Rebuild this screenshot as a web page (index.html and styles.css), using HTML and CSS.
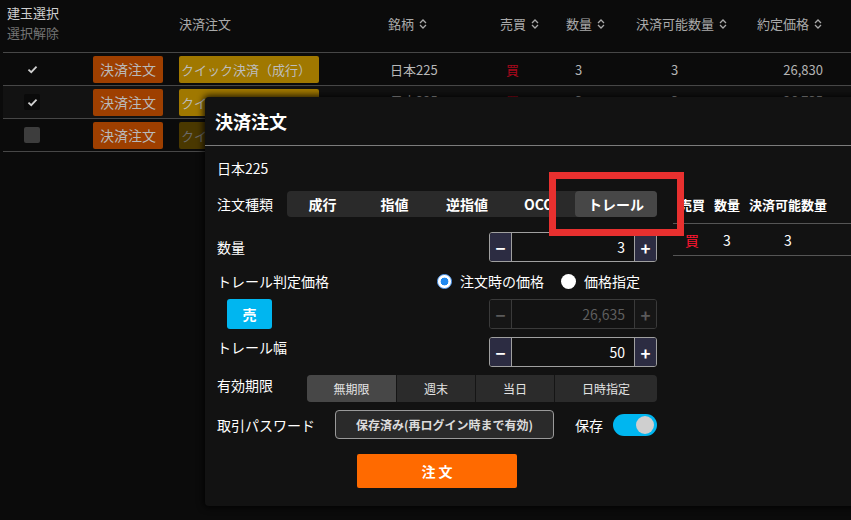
FILE: index.html
```html
<!DOCTYPE html>
<html lang="ja">
<head>
<meta charset="utf-8">
<title>決済注文</title>
<link rel="stylesheet" href="styles.css">
</head>
<body>
<div class="page">
  <div class="positions">
    <div class="prow phead">
      <div class="pc c-sel"><div class="sel-title">建玉選択</div><div class="sel-clear">選択解除</div></div>
      <div class="pc"></div>
      <div class="pc hd h-order">決済注文</div>
      <div class="pc hd h-name">銘柄<svg class="sort" viewBox="0 0 8 12"><path d="M1 5 L4 2 L7 5 M1 7 L4 10 L7 7"/></svg></div>
      <div class="pc hd h-side">売買<svg class="sort" viewBox="0 0 8 12"><path d="M1 5 L4 2 L7 5 M1 7 L4 10 L7 7"/></svg></div>
      <div class="pc hd h-qty">数量<svg class="sort" viewBox="0 0 8 12"><path d="M1 5 L4 2 L7 5 M1 7 L4 10 L7 7"/></svg></div>
      <div class="pc hd h-avail">決済可能数量<svg class="sort" viewBox="0 0 8 12"><path d="M1 5 L4 2 L7 5 M1 7 L4 10 L7 7"/></svg></div>
      <div class="pc hd h-price">約定価格<svg class="sort" viewBox="0 0 8 12"><path d="M1 5 L4 2 L7 5 M1 7 L4 10 L7 7"/></svg></div>
    </div>

    <div class="prow tr r-odd">
      <div class="pc"><span class="cb cb-on"><svg viewBox="0 0 12 10"><path d="M1.5 5.2 L4.6 8 L10.5 1.8"/></svg></span></div>
      <div class="pc"><span class="btn-close">決済注文</span></div>
      <div class="pc"><span class="btn-quick">クイック決済（成行）</span></div>
      <div class="pc v-name">日本225</div>
      <div class="pc v-side">買</div>
      <div class="pc v-qty">3</div>
      <div class="pc v-avail">3</div>
      <div class="pc v-price">26,830</div>
    </div>

    <div class="prow tr r-even">
      <div class="pc"><span class="cb cb-on cb-dark"><svg viewBox="0 0 12 10"><path d="M1.5 5.2 L4.6 8 L10.5 1.8"/></svg></span></div>
      <div class="pc"><span class="btn-close">決済注文</span></div>
      <div class="pc"><span class="btn-quick">クイック決済（成行）</span></div>
      <div class="pc v-name">日本225</div>
      <div class="pc v-side">買</div>
      <div class="pc v-qty">3</div>
      <div class="pc v-avail">3</div>
      <div class="pc v-price">26,735</div>
    </div>

    <div class="prow tr r-odd">
      <div class="pc"><span class="cb cb-off"></span></div>
      <div class="pc"><span class="btn-close">決済注文</span></div>
      <div class="pc"><span class="btn-quick btn-quick-dim">クイック決済（成行）</span></div>
      <div class="pc v-name">日本225</div>
      <div class="pc v-side">買</div>
      <div class="pc v-qty">3</div>
      <div class="pc v-avail">3</div>
      <div class="pc v-price">26,700</div>
    </div>
  </div>

  <div class="modal">
    <div class="modal-head">決済注文</div>
    <div class="modal-body">
      <div class="form">
        <div class="frow f-name">日本225</div>

        <div class="frow f-type">
          <span class="lbl">注文種類</span>
          <div class="seg">
            <span class="seg-item">成行</span>
            <span class="seg-item">指値</span>
            <span class="seg-item">逆指値</span>
            <span class="seg-item">OCO</span>
            <span class="seg-item active">トレール</span>
          </div>
        </div>

        <div class="frow f-qty">
          <span class="lbl">数量</span>
          <div class="stepper">
            <span class="st-btn">−</span>
            <span class="st-val">3</span>
            <span class="st-btn">+</span>
          </div>
        </div>

        <div class="frow f-judge">
          <span class="lbl">トレール判定価格</span>
          <div class="radios">
            <span class="radio radio-on"></span><span class="rlbl">注文時の価格</span>
            <span class="radio radio-off"></span><span class="rlbl">価格指定</span>
          </div>
        </div>

        <div class="frow f-sell">
          <span class="btn-sell">売</span>
          <div class="stepper disabled">
            <span class="st-btn">−</span>
            <span class="st-val">26,635</span>
            <span class="st-btn">+</span>
          </div>
        </div>

        <div class="frow f-width">
          <span class="lbl">トレール幅</span>
          <div class="stepper">
            <span class="st-btn">−</span>
            <span class="st-val">50</span>
            <span class="st-btn">+</span>
          </div>
        </div>

        <div class="frow f-exp">
          <span class="lbl">有効期限</span>
          <div class="seg2">
            <span class="seg2-item active">無期限</span>
            <span class="seg2-item">週末</span>
            <span class="seg2-item">当日</span>
            <span class="seg2-item">日時指定</span>
          </div>
        </div>

        <div class="frow f-pass">
          <span class="lbl lbl-pass">取引パスワード</span>
          <span class="btn-pass">保存済み(再ログイン時まで有効)</span>
          <span class="save-lbl">保存</span>
          <span class="toggle"><span class="knob"></span></span>
        </div>

        <div class="frow f-submit">
          <span class="btn-order">注文</span>
        </div>
      </div>

      <div class="side">
        <div class="side-row side-head">
          <span>売買</span><span>数量</span><span>決済可能数量</span>
        </div>
        <div class="side-row side-data">
          <span class="buy">買</span><span>3</span><span>3</span>
        </div>
      </div>
    </div>
  </div>

  <div class="annot"></div>
</div>
</body>
</html>
```

FILE: styles.css
```css
* { box-sizing: border-box; }

html, body {
  margin: 0;
  padding: 0;
}

body {
  width: 851px;
  height: 520px;
  overflow: hidden;
  background: #0b0b0b;
  font-family: "Noto Sans CJK JP", "Noto Sans", sans-serif;
  color: #b4b4b4;
}

.page {
  position: relative;
  width: 851px;
  height: 520px;
  overflow: hidden;
}

/* ---------- positions table ---------- */
.positions {
  margin-left: 3px;
}

.prow {
  display: grid;
  grid-template-columns: 83px 86px 208px 100px 70px 70px 120px 1fr;
  border-bottom: 1px solid #474747;
}

.phead {
  height: 53px;
}

.pc {
  display: flex;
  align-items: center;
  min-width: 0;
  white-space: nowrap;
}

.c-sel {
  flex-direction: column;
  align-items: flex-start;
  padding: 3px 0 0 4px;
  font-size: 13px;
  line-height: 20px;
}
.sel-title { color: #cfcfcf; }
.sel-clear { color: #747474; }

.hd {
  align-self: start;
  padding-top: 13px;
  font-size: 13px;
  line-height: 22px;
  color: #a9a9a9;
}
.sort {
  width: 8px;
  height: 12px;
  margin-left: 5px;
  fill: none;
  stroke: #a9a9a9;
  stroke-width: 1.3;
}
.h-order { padding-left: 7px; }
.h-name { padding-left: 8px; }
.h-side { padding-left: 20px; }
.h-qty { padding-left: 16px; }
.h-avail { padding-left: 16px; }
.h-price { padding-left: 17px; }

.tr {
  height: 33px;
  font-size: 13px;
}
.r-odd { background: #0b0b0b; }
.r-even { background: #121212; }

.cb {
  width: 16px;
  height: 16px;
  margin-left: 21px;
  border-radius: 2px;
  display: flex;
  align-items: center;
  justify-content: center;
}
.cb svg {
  width: 11px;
  height: 9px;
  fill: none;
  stroke: #d0d0d0;
  stroke-width: 2;
}
.cb-dark { background: #0a0a0a; }
.cb-off { background: #3d3d3d; }

.btn-close {
  margin-left: 7px;
  width: 70px;
  height: 27px;
  border-radius: 2px;
  background: #9e3f00;
  color: #b9b9b9;
  font-size: 14px;
  display: flex;
  align-items: center;
  justify-content: center;
}
.btn-quick {
  margin-left: 7px;
  width: 140px;
  height: 27px;
  border-radius: 2px;
  background: #a07800;
  color: #bdbdbd;
  font-size: 13px;
  display: flex;
  align-items: center;
  padding-left: 2px;
}
.btn-quick-dim {
  background: #4a3800;
  color: #6a6a6a;
}

.v-name { padding-left: 10px; color: #b8b8b8; }
.v-side { padding-left: 26px; color: #a8081c; }
.v-qty { padding-left: 25px; }
.v-avail { padding-left: 51px; }
.v-price { justify-content: flex-end; padding-right: 28px; }

.r-even .pc { align-items: flex-start; padding-top: 5px; }
.r-even .pc:nth-child(-n+3) { align-items: center; padding-top: 0; }

/* ---------- modal ---------- */
.modal {
  position: absolute;
  left: 205px;
  top: 97px;
  width: 760px;
  height: 409px;
  background: #121212;
  border-radius: 4px;
  box-shadow: 0 0 6px 2px rgba(0, 0, 0, 0.75);
}

.modal-head {
  height: 49px;
  border-bottom: 1px solid #7c7c7c;
  display: flex;
  align-items: center;
  padding-left: 10px;
  font-size: 18px;
  font-weight: 700;
  color: #ffffff;
}

.modal-body {
  display: flex;
}

.form {
  width: 468px;
  flex: none;
  padding: 12px 16px 0 12px;
  display: flex;
  flex-direction: column;
  color: #ffffff;
  font-size: 14px;
}

.frow {
  display: flex;
  align-items: center;
}
.lbl {
  line-height: 20px;
  white-space: nowrap;
}

.f-name { height: 20px; line-height: 20px; }

.f-type { margin-top: 13px; justify-content: space-between; }
.seg {
  display: grid;
  grid-template-columns: 71px 73px 72px 72px 82px;
  width: 370px;
  height: 26px;
  background: #2a2a2a;
  border-radius: 4px;
}
.seg-item {
  display: flex;
  align-items: center;
  justify-content: center;
  font-weight: 700;
  font-size: 14px;
  color: #ffffff;
  border-radius: 4px;
}
.seg-item.active { background: #474747; }

.f-qty { margin-top: 15px; justify-content: space-between; }

.stepper {
  width: 168px;
  height: 30px;
  display: flex;
  border: 1px solid #a0a0a0;
  border-radius: 3px;
  overflow: hidden;
  background: #111111;
}
.st-btn {
  width: 22px;
  flex: none;
  background: #2c2c42;
  color: #ffffff;
  display: flex;
  align-items: center;
  justify-content: center;
  font-size: 17px;
  font-weight: 700;
}
.st-btn:first-child { border-right: 1px solid #a0a0a0; }
.st-btn:last-child { border-left: 1px solid #a0a0a0; }
.st-val {
  flex: 1;
  display: flex;
  align-items: center;
  justify-content: flex-end;
  padding-right: 9px;
  font-size: 14px;
  color: #ffffff;
}
.stepper.disabled {
  border-color: #3a3a3a;
  background: #121212;
}
.stepper.disabled .st-btn {
  background: #161616;
  color: #5a5a5a;
  border-color: #3a3a3a;
}
.stepper.disabled .st-val { color: #5e5e5e; }

.f-judge { margin-top: 9px; height: 20px; }
.radios {
  margin-left: auto;
  margin-right: 17px;
  display: flex;
  align-items: center;
}
.radio {
  width: 15px;
  height: 15px;
  border-radius: 50%;
  background: #ffffff;
  flex: none;
}
.radio-on {
  border: 1px solid #5aa6ff;
  background: radial-gradient(circle, #1e88f0 0 3.6px, #ffffff 4.2px);
}
.rlbl { margin-left: 8px; }
.rlbl + .radio { margin-left: 17px; }

.f-sell { margin-top: 8px; justify-content: space-between; }
.btn-sell {
  margin-left: 10px;
  width: 45px;
  height: 30px;
  border-radius: 3px;
  background: #00b6f0;
  color: #ffffff;
  font-weight: 700;
  font-size: 14px;
  display: flex;
  align-items: center;
  justify-content: center;
}

.f-width { margin-top: 8px; justify-content: space-between; align-items: flex-start; }

.f-exp { margin-top: 8px; justify-content: space-between; align-items: flex-start; }
.seg2 {
  display: grid;
  grid-template-columns: 89px 79px 79px 103px;
  width: 350px;
  height: 27px;
  background: #2b2b2b;
  border-radius: 4px;
  overflow: hidden;
}
.seg2-item {
  display: flex;
  align-items: center;
  justify-content: center;
  font-size: 12px;
  color: #e4e4e4;
}
.seg2-item + .seg2-item { border-left: 1px solid #151515; }
.seg2-item.active { background: #474747; }

.f-pass { margin-top: 8px; }
.lbl-pass { width: 118px; flex: none; }
.btn-pass {
  width: 219px;
  height: 29px;
  border: 1px solid #9a9a9a;
  border-radius: 4px;
  background: #2a2a2a;
  color: #dcdcdc;
  font-size: 12px;
  font-weight: 700;
  display: flex;
  align-items: center;
  justify-content: center;
  white-space: nowrap;
}
.save-lbl { margin-left: 21px; }
.toggle {
  margin-left: 10px;
  width: 44px;
  height: 22px;
  border-radius: 11px;
  background: #00b6f0;
  display: flex;
  align-items: center;
  justify-content: flex-end;
  padding-right: 3px;
}
.knob {
  width: 18px;
  height: 18px;
  border-radius: 50%;
  background: #cfcfcf;
}

.f-submit { margin-top: 15px; justify-content: center; }
.btn-order {
  width: 160px;
  height: 34px;
  border-radius: 2px;
  background: #ff6a00;
  color: #ffffff;
  font-weight: 700;
  font-size: 14px;
  letter-spacing: 3px;
  padding-left: 3px;
  display: flex;
  align-items: center;
  justify-content: center;
}

/* side table inside modal */
.side {
  flex: 1;
  padding-top: 39px;
}
.side-row {
  display: grid;
  grid-template-columns: 38px 32px 90px;
  border-bottom: 1px solid #555555;
  align-items: center;
}
.side-row span { text-align: center; white-space: nowrap; }
.side-head {
  height: 39px;
  font-weight: 700;
  font-size: 13px;
  color: #ffffff;
}
.side-data {
  height: 32px;
  font-size: 14px;
  color: #ffffff;
}
.side-data .buy { color: #ff1530; }

/* red annotation frame */
.annot {
  position: absolute;
  left: 549px;
  top: 172px;
  width: 135px;
  height: 64px;
  border: 7px solid #e8302f;
}
```
